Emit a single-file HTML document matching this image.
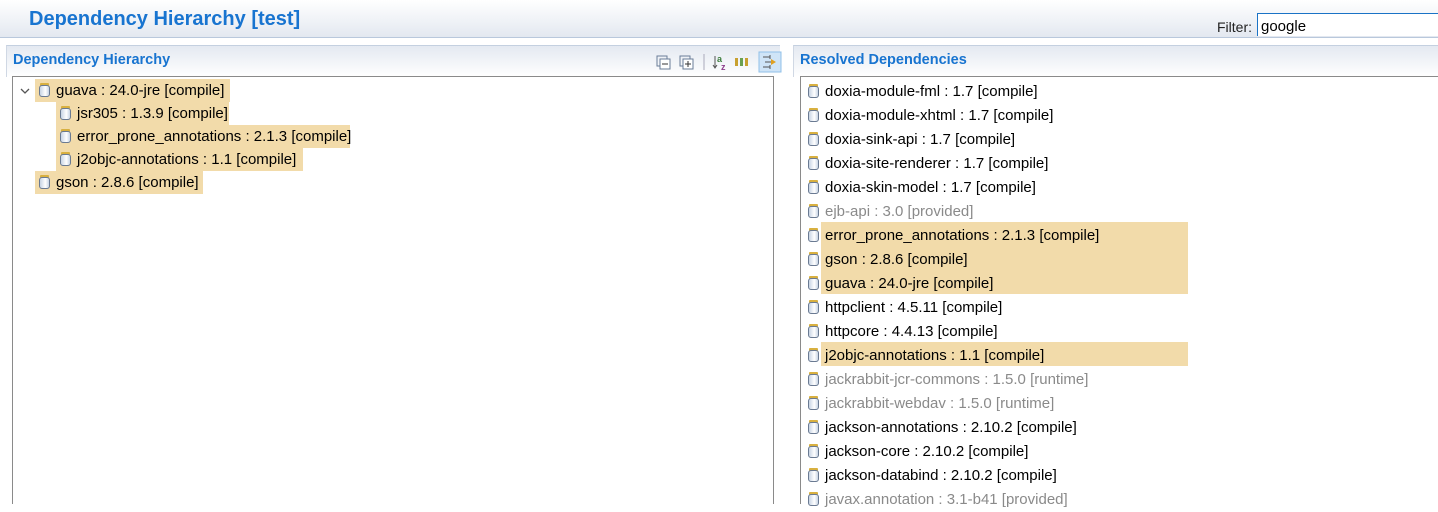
<!DOCTYPE html>
<html><head><meta charset="utf-8"><style>
*{margin:0;padding:0;box-sizing:border-box}
body{width:1438px;height:504px;overflow:hidden;background:#fff;font-family:"Liberation Sans",sans-serif;font-size:15px;color:#000;position:relative}
.top{position:absolute;left:0;top:0;width:1438px;height:38px;background:linear-gradient(#fff,#e3e8f0);border-bottom:1px solid #b9c8dc}
.title{position:absolute;left:29px;top:8px;font-size:20px;font-weight:bold;color:#1874d0}
.filter{position:absolute;left:1217px;top:19px;font-size:14px;color:#222}
.finput{position:absolute;left:1257px;top:13px;width:181px;height:23px;border:1px solid #1a73c6;border-right:none;border-bottom:none;background:#fff;padding-left:3px;padding-top:4px;font-size:15px;line-height:18px}
.ph{position:absolute;top:45px;height:32px;background:linear-gradient(#e4e9f1,#fff);border-top:1px solid #c4d0e0;border-left:1px solid #d0d8e4}
.ph span{position:absolute;left:6px;top:6px;font-weight:bold;color:#1874d0;font-size:14.5px}
.box{position:absolute;top:76px;background:#fff;border:1px solid #8a8a8a;border-bottom:none}
.row{position:absolute;height:23px;line-height:23px;white-space:nowrap}
.hl{background:#f2dbaa}
.jar{display:inline-block;width:11px;height:14px;position:relative;vertical-align:-2px;margin-right:6px}
.jar:before{content:"";position:absolute;left:1px;top:0;width:9px;height:3px;background:#d8b040;border-radius:1px}
.jar:after{content:"";position:absolute;left:0;top:2px;width:11px;height:12px;border:1px solid #6a7a92;border-radius:3px;background:linear-gradient(90deg,#c8d4e4,#fff 60%,#c8d4e4);box-sizing:border-box}
.g{color:#8a8a8a}
</style></head><body>
<div class="top"><div class="title">Dependency Hierarchy [test]</div>
<div class="filter">Filter:</div><div class="finput">google</div></div>

<div class="ph" style="left:6px;width:774px"><span>Dependency Hierarchy</span>
<svg style="position:absolute;left:648px;top:5px" width="130" height="22" viewBox="0 0 130 22">
<rect x="2" y="5" width="10" height="10" fill="none" stroke="#6a7d98"/><rect x="5" y="8" width="10" height="10" fill="#fff" stroke="#6a7d98"/><line x1="7" y1="13" x2="13" y2="13" stroke="#333"/>
<rect x="25" y="5" width="10" height="10" fill="none" stroke="#6a7d98"/><rect x="28" y="8" width="10" height="10" fill="#fff" stroke="#6a7d98"/><line x1="30" y1="13" x2="36" y2="13" stroke="#333"/><line x1="33" y1="10" x2="33" y2="16" stroke="#333"/>
<line x1="49" y1="3" x2="49" y2="19" stroke="#aab"/>
<line x1="60" y1="5" x2="60" y2="16" stroke="#555"/><path d="M58 14l2 3 2-3" fill="none" stroke="#555"/>
<text x="62" y="11" font-size="9" font-weight="bold" fill="#3c7c3c" font-family="Liberation Sans">a</text><text x="66" y="19" font-size="9" font-weight="bold" fill="#8c3c8c" font-family="Liberation Sans">z</text>
<rect x="80" y="7" width="3" height="8" fill="#c8a030"/><rect x="85" y="7" width="3" height="8" fill="#6aa050"/><rect x="90" y="7" width="3" height="8" fill="#c8a030"/>
<rect x="104" y="1" width="22" height="20" fill="#cfe4f7" stroke="#90c0e8"/>
<path d="M108 6h7m0-2v4M108 16h7m0-2v4M110 11h9" stroke="#555" fill="none"/><path d="M116 8l5 3-5 3z" fill="#e0a020"/>
</svg></div>
<div class="ph" style="left:793px;width:645px"><span>Resolved Dependencies</span></div>

<div class="box" style="left:12px;top:76px;width:762px;height:428px">
<svg style="position:absolute;left:7px;top:10px" width="10" height="8"><path d="M1 2l4 4 4-4" fill="none" stroke="#555" stroke-width="1.3"/></svg>
<div class="row hl" style="left:22px;top:2px;padding-left:4px;width:195px"><i class="jar"></i>guava : 24.0-jre [compile]</div>
<div class="row hl" style="left:43px;top:25px;padding-left:4px;width:173px"><i class="jar"></i>jsr305 : 1.3.9 [compile]</div>
<div class="row hl" style="left:43px;top:48px;padding-left:4px;width:294px"><i class="jar"></i>error_prone_annotations : 2.1.3 [compile]</div>
<div class="row hl" style="left:43px;top:71px;padding-left:4px;width:247px"><i class="jar"></i>j2objc-annotations : 1.1 [compile]</div>
<div class="row hl" style="left:22px;top:94px;padding-left:4px;width:168px"><i class="jar"></i>gson : 2.8.6 [compile]</div>
</div>

<div class="box" style="left:800px;top:76px;width:638px;height:428px;border-right:none">
<div class="hl" style="position:absolute;left:20px;top:145px;width:367px;height:72px"></div>
<div class="hl" style="position:absolute;left:20px;top:265px;width:367px;height:24px"></div>
<div style="position:absolute;left:7px;top:3px;line-height:24px;white-space:nowrap">
<div><i class="jar"></i>doxia-module-fml : 1.7 [compile]</div>
<div><i class="jar"></i>doxia-module-xhtml : 1.7 [compile]</div>
<div><i class="jar"></i>doxia-sink-api : 1.7 [compile]</div>
<div><i class="jar"></i>doxia-site-renderer : 1.7 [compile]</div>
<div><i class="jar"></i>doxia-skin-model : 1.7 [compile]</div>
<div class="g"><i class="jar"></i>ejb-api : 3.0 [provided]</div>
<div><i class="jar"></i>error_prone_annotations : 2.1.3 [compile]</div>
<div><i class="jar"></i>gson : 2.8.6 [compile]</div>
<div><i class="jar"></i>guava : 24.0-jre [compile]</div>
<div><i class="jar"></i>httpclient : 4.5.11 [compile]</div>
<div><i class="jar"></i>httpcore : 4.4.13 [compile]</div>
<div><i class="jar"></i>j2objc-annotations : 1.1 [compile]</div>
<div class="g"><i class="jar"></i>jackrabbit-jcr-commons : 1.5.0 [runtime]</div>
<div class="g"><i class="jar"></i>jackrabbit-webdav : 1.5.0 [runtime]</div>
<div><i class="jar"></i>jackson-annotations : 2.10.2 [compile]</div>
<div><i class="jar"></i>jackson-core : 2.10.2 [compile]</div>
<div><i class="jar"></i>jackson-databind : 2.10.2 [compile]</div>
<div class="g"><i class="jar"></i>javax.annotation : 3.1-b41 [provided]</div>
</div>
</div>
</body></html>
